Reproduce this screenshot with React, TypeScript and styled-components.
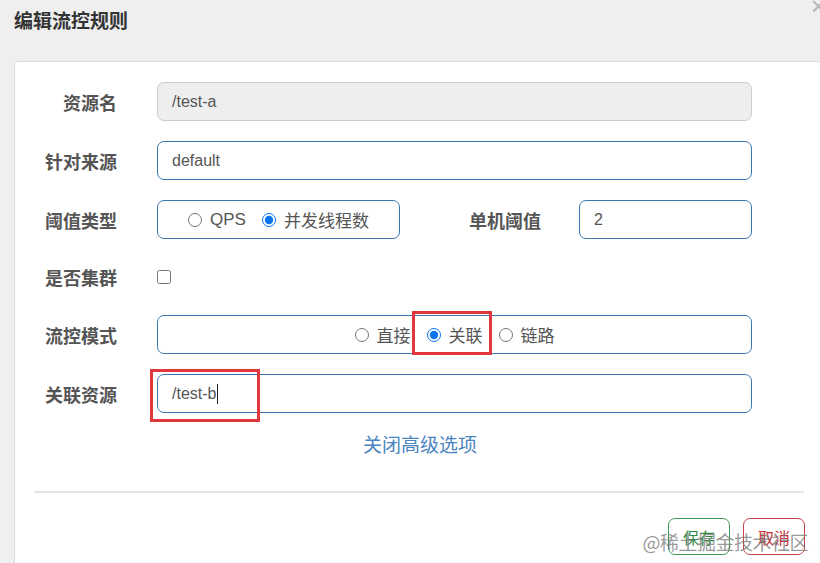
import React from 'react';
import styled, { createGlobalStyle, css } from 'styled-components';

const GlobalStyle = createGlobalStyle`
  html, body {
    margin: 0;
    padding: 0;
    background: #efefef;
    overflow: hidden;
  }
  body {
    font-family: "Liberation Sans", "Noto Sans CJK SC", sans-serif;
    color: #555;
  }
`;

const Page = styled.div`
  position: relative;
  width: 820px;
  height: 563px;
  overflow: hidden;
`;

const Header = styled.div`
  height: 61px;
  padding-left: 14px;
  box-sizing: border-box;
  padding-top: 11px;
`;

const Title = styled.h4`
  margin: 0;
  font-size: 19px;
  line-height: 21px;
  font-weight: 700;
  color: #333;
`;

const Close = styled.span`
  position: absolute;
  right: -6px;
  top: -9px;
  font-size: 26px;
  color: #b5b5b5;
  font-family: "Liberation Sans", sans-serif;
`;

const Panel = styled.div`
  margin-left: 14px;
  width: 810px;
  height: 560px;
  box-sizing: border-box;
  background: #fff;
  border: 1px solid #ddd;
  border-radius: 4px;
  padding-top: 20px;
`;

const Form = styled.div`
  display: flex;
  flex-direction: column;
  gap: 20px;
`;

const Row = styled.div<{ $h?: number }>`
  display: flex;
  align-items: center;
  height: ${p => p.$h ?? 39}px;
`;

const Label = styled.label<{ $w?: number; $mr?: number }>`
  width: ${p => p.$w ?? 102}px;
  margin-right: ${p => p.$mr ?? 40}px;
  text-align: right;
  font-size: 18px;
  font-weight: 700;
  color: #555;
  font-family: "Noto Sans CJK SC", sans-serif;
  flex-shrink: 0;
`;

const Field = styled.div<{ $w?: number; $disabled?: boolean; $center?: boolean }>`
  position: relative;
  width: ${p => p.$w ?? 595}px;
  height: 39px;
  box-sizing: border-box;
  border: 1px solid ${p => (p.$disabled ? '#ccc' : '#3c78b0')};
  background: ${p => (p.$disabled ? '#eee' : '#fff')};
  border-radius: 7px;
  padding: 0 14px;
  display: flex;
  align-items: center;
  justify-content: ${p => (p.$center ? 'center' : 'flex-start')};
  font-size: 16px;
  color: #555;
  flex-shrink: 0;
`;

const Caret = styled.span`
  display: inline-block;
  width: 1px;
  height: 20px;
  background: #222;
  margin-left: 1px;
  vertical-align: middle;
`;

const Marker = styled.span<{ $l: number; $t: number; $w: number; $h: number }>`
  position: absolute;
  left: ${p => p.$l}px;
  top: ${p => p.$t}px;
  width: ${p => p.$w}px;
  height: ${p => p.$h}px;
  box-sizing: border-box;
  border: 3px solid #e0373c;
  pointer-events: none;
`;

const Option = styled.label<{ $marked?: boolean }>`
  position: relative;
  display: inline-flex;
  align-items: center;
  margin-right: 16px;
  font-size: 17px;
  color: #555;
  font-family: "Liberation Sans", "Noto Sans CJK SC", sans-serif;

  &:last-child {
    margin-right: 0;
  }

  ${p =>
    p.$marked &&
    css`
      &::after {
        content: '';
        position: absolute;
        left: -15px;
        right: -9px;
        top: -11px;
        bottom: -8px;
        border: 3px solid #e0373c;
      }
    `}
`;

const Radio = styled.input.attrs({ type: 'radio' })`
  width: 14px;
  height: 14px;
  margin: 0 8px 0 0;
  accent-color: #0b74f0;
`;

const Check = styled.input.attrs({ type: 'checkbox' })`
  width: 14px;
  height: 14px;
  margin: 0;
`;

const Toggle = styled.div`
  text-align: center;
  margin-top: 19px;
  padding-left: 2px;
  font-size: 19px;
  line-height: 24px;
  color: #4a84c0;
  font-family: "Noto Sans CJK SC", sans-serif;
`;

const Divider = styled.hr`
  margin: 35px 19px 0;
  border: none;
  border-top: 2px solid #e5e5e5;
`;

const Footer = styled.div`
  position: relative;
  display: flex;
  justify-content: flex-end;
  gap: 13px;
  padding: 25px 18px 0 0;
`;

const Button = styled.button<{ $tone: 'ok' | 'cancel' }>`
  width: 62px;
  height: 37px;
  background: #fff;
  border-radius: 7px;
  font-size: 16px;
  font-family: "Noto Sans CJK SC", sans-serif;
  border: 1px solid ${p => (p.$tone === 'ok' ? '#3d9c55' : '#c9434b')};
  color: ${p => (p.$tone === 'ok' ? '#2f8a45' : '#c9303a')};
  padding: 0;
`;

const Watermark = styled.span`
  position: absolute;
  right: 15px;
  top: 35px;
  font-size: 19px;
  color: rgba(120, 120, 120, 0.75);
  font-family: "Noto Sans CJK SC", sans-serif;
  pointer-events: none;
  letter-spacing: -0.5px;
`;

export default function App() {
  return (
    <Page>
      <GlobalStyle />
      <Header>
        <Title>编辑流控规则</Title>
      </Header>
      <Close>×</Close>
      <Panel>
        <Form>
          <Row>
            <Label>资源名</Label>
            <Field $disabled>/test-a</Field>
          </Row>
          <Row>
            <Label>针对来源</Label>
            <Field>default</Field>
          </Row>
          <Row>
            <Label>阈值类型</Label>
            <Field $w={243} $center>
              <Option>
                <Radio name="grade" />
                QPS
              </Option>
              <Option>
                <Radio name="grade" defaultChecked />
                并发线程数
              </Option>
            </Field>
            <Label $w={141} $mr={38}>单机阈值</Label>
            <Field $w={173}>2</Field>
          </Row>
          <Row $h={36}>
            <Label>是否集群</Label>
            <Check />
          </Row>
          <Row>
            <Label>流控模式</Label>
            <Field $center>
              <Option>
                <Radio name="strategy" />
                直接
              </Option>
              <Option $marked>
                <Radio name="strategy" defaultChecked />
                关联
              </Option>
              <Option>
                <Radio name="strategy" />
                链路
              </Option>
            </Field>
          </Row>
          <Row>
            <Label>关联资源</Label>
            <Field>
              /test-b<Caret />
              <Marker $l={-8} $t={-6} $w={110} $h={53} />
            </Field>
          </Row>
        </Form>
        <Toggle>关闭高级选项</Toggle>
        <Divider />
        <Footer>
          <Button $tone="ok">保存</Button>
          <Button $tone="cancel">取消</Button>
          <Watermark>@稀土掘金技术社区</Watermark>
        </Footer>
      </Panel>
    </Page>
  );
}
